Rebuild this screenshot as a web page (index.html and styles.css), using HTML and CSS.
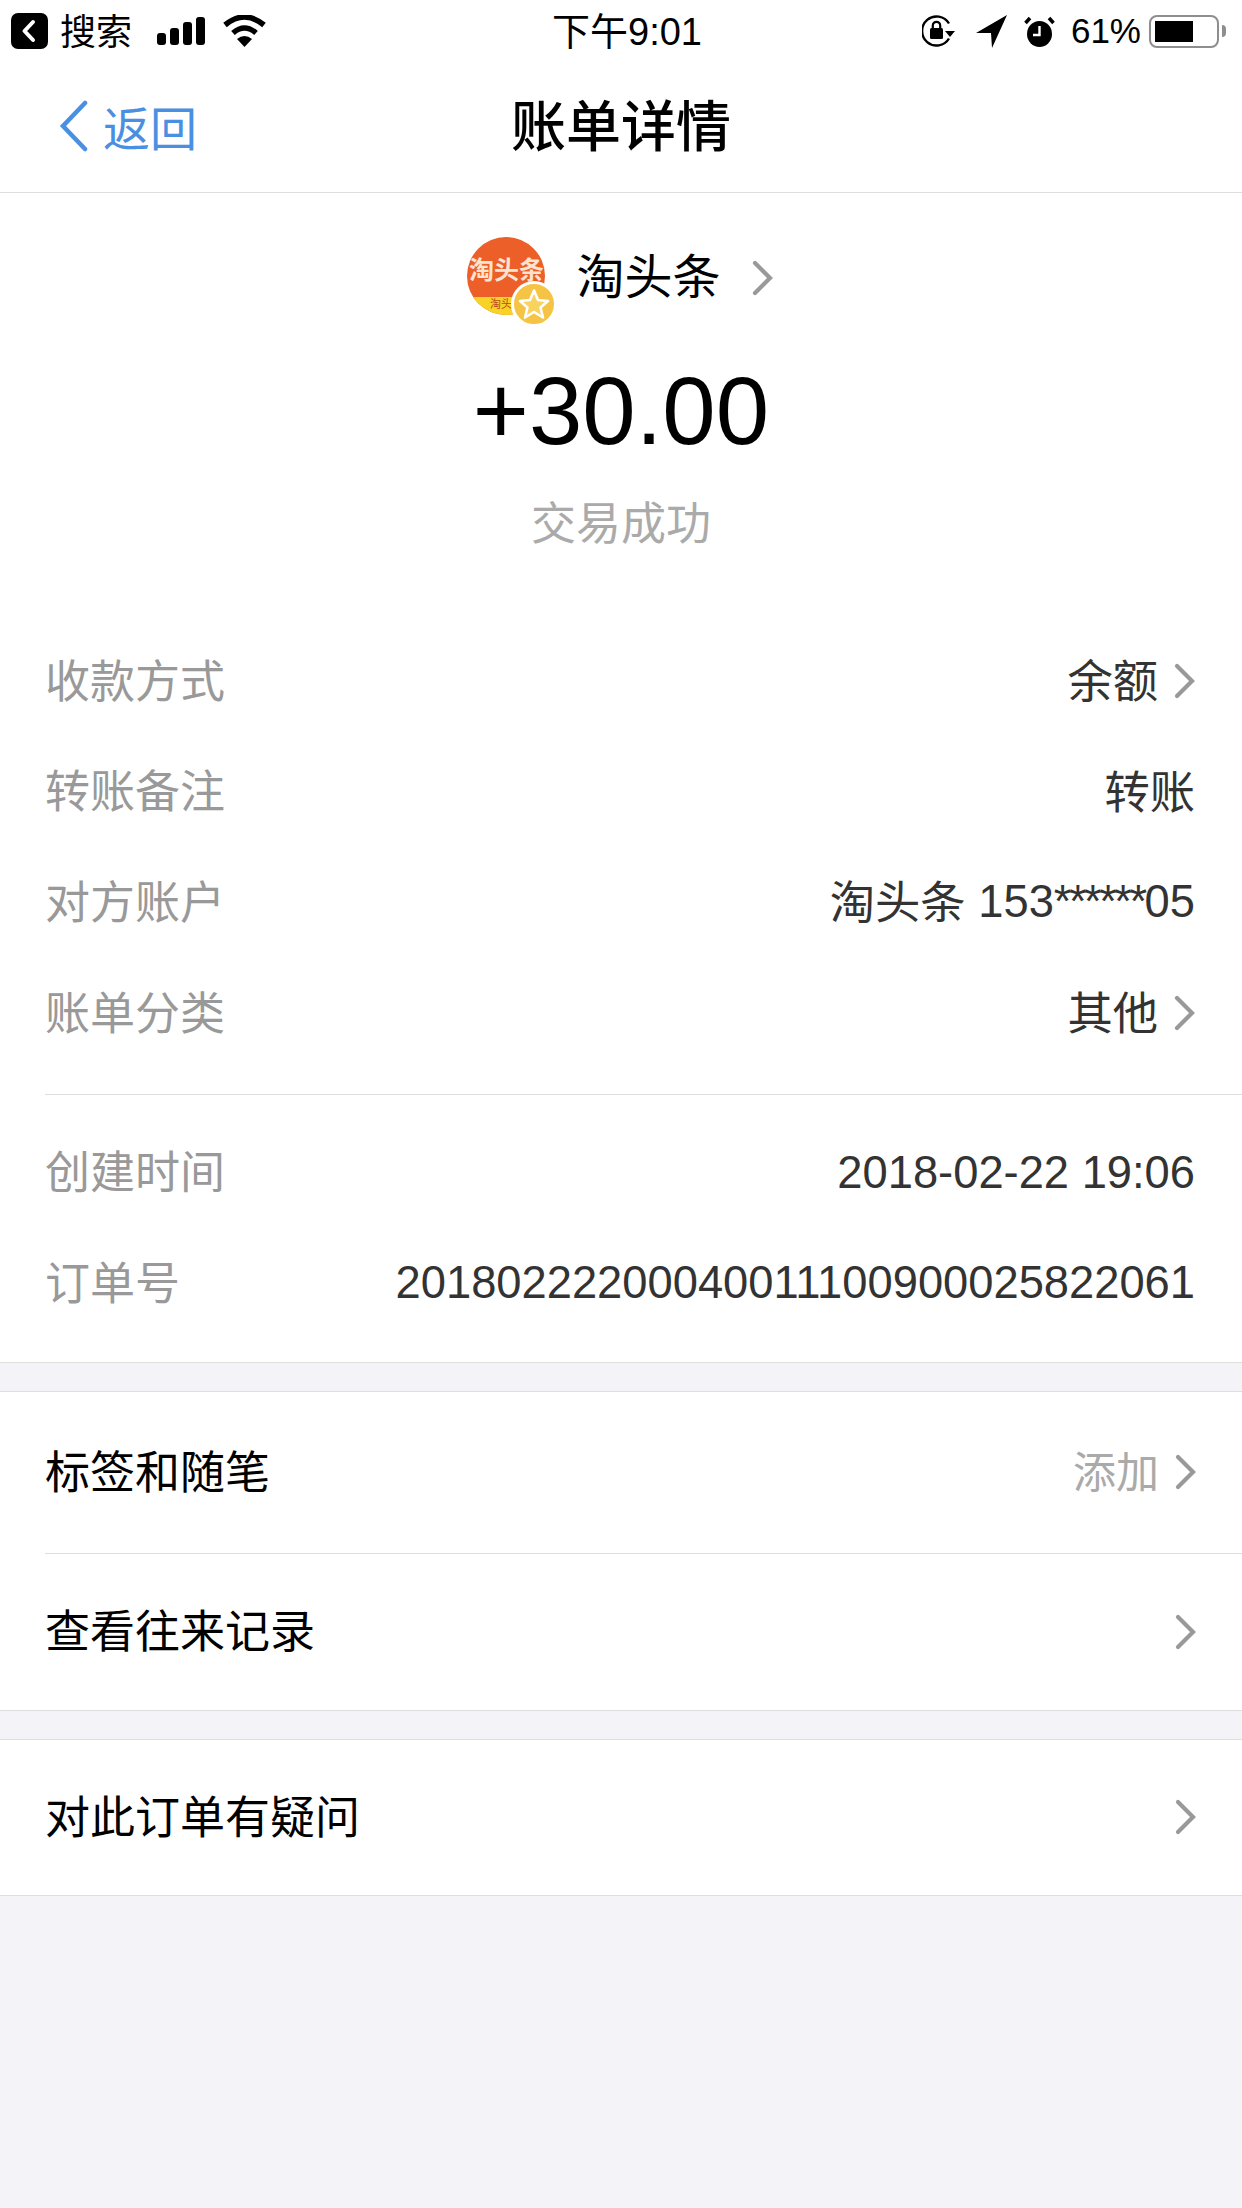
FILE: index.html
```html
<!DOCTYPE html>
<html>
<head>
    <title>账单详情</title>
    <link rel="stylesheet" href="styles.css">
</head>
<body>

    <div class="status-bar">
        <div class="status-left">
            <svg width="37" height="36" viewBox="0 0 37 36"><rect width="37" height="36" rx="7" fill="#000"/><path d="M22 9 L13.500 18 L22 27" fill="none" stroke="#fff" stroke-width="4" stroke-linecap="round" stroke-linejoin="round"/></svg>
            <span class="status-text">搜索</span>
            <svg class="signal" width="48" height="28" viewBox="0 0 48 28"><rect x="0" y="16" width="9" height="12" rx="3"/><rect x="13" y="11" width="9" height="17" rx="3"/><rect x="26" y="5" width="9" height="23" rx="3"/><rect x="39" y="0" width="9" height="28" rx="3"/></svg>
            <svg class="wifi" width="43" height="32" viewBox="0 0 43 32"><path d="M2 10 Q21.500 -6 41 10" fill="none" stroke="#000" stroke-width="5.500"/><path d="M10 18 Q21.500 8 33 18" fill="none" stroke="#000" stroke-width="5.500"/><path d="M14 24 Q21.500 18 29 24 L21.500 32 Z" fill="#000"/></svg>
        </div>
        <div class="status-time">下午9:01</div>
        <div class="status-right">
            <svg width="33" height="34" viewBox="0 0 33 34"><path d="M27 9.500 A14.500 14.500 0 1 0 27 24.500" fill="none" stroke="#000" stroke-width="2.400"/><path d="M23 17 L33 17 L28 23 Z" fill="#000"/><rect x="8" y="14" width="13" height="11" rx="1.500" fill="#000"/><path d="M10.800 14 V11.500 A3.700 3.700 0 0 1 18.200 11.500 V14" fill="none" stroke="#000" stroke-width="2.200"/></svg>
            <svg class="gps" width="31" height="33" viewBox="0 0 31 33"><path d="M31 0 L0 18 L15 18 L16 33 Z" fill="#000"/></svg>
            <svg class="alarm" width="31" height="33" viewBox="0 0 31 33"><ellipse cx="15.500" cy="19" rx="12.500" ry="13" fill="#000"/><path d="M15.500 11 V20 H9" fill="none" stroke="#fff" stroke-width="2.400"/><path d="M1.500 8 L6 3 M29.500 8 L25 3" stroke="#000" stroke-width="3.500"/></svg>
            <span class="battery-text">61%</span>
            <div class="battery"><div class="battery-level"></div></div>
            <div class="battery-cap"></div>
        </div>
    </div>

    <div class="nav-bar">
        <div class="nav-back">
            <svg width="32" height="52" viewBox="0 0 32 52"><path d="M27 3 L5 26 L27 49" fill="none" stroke="#4a90e2" stroke-width="4.500" stroke-linecap="round"/></svg>
            <span>返回</span>
        </div>
        <div class="nav-title">账单详情</div>
    </div>

    <div class="section detail-section">
        <div class="hero">
            <div class="merchant">
                <div class="avatar">
                    <div class="avatar-clip">
                        <div class="avatar-name">淘头条</div>
                        <div class="avatar-strip">淘头条</div>
                    </div>
                    <svg class="avatar-badge" width="46" height="46" viewBox="0 0 46 46"><circle cx="23" cy="23" r="21.500" fill="#f6c445" stroke="#fff" stroke-width="3"/><path d="M23 9.500 L27 19 L37 20 L29.500 26.500 L32 36.500 L23 31 L14 36.500 L16.500 26.500 L9 20 L19 19 Z" fill="#f8d360" stroke="#fff" stroke-width="2.600" stroke-linejoin="round"/></svg>
                </div>
                <span class="merchant-name">淘头条</span>
                <svg class="chevron merchant-chevron" width="24" height="38" viewBox="0 0 24 38"><path d="M4 4 L19 19 L4 34" fill="none" stroke="#999" stroke-width="4.200" stroke-linecap="round"/></svg>
            </div>
            <div class="amount">+30.00</div>
            <div class="trade-status">交易成功</div>
        </div>

        <div class="info-group first-group">
            <div class="info-row">
                <span class="info-label">收款方式</span>
                <span class="info-value"><span class="cjk">余额</span><svg class="chevron" width="24" height="38" viewBox="0 0 24 38"><path d="M4 4 L19 19 L4 34" fill="none" stroke="#999" stroke-width="4.200" stroke-linecap="round"/></svg></span>
            </div>
            <div class="info-row">
                <span class="info-label">转账备注</span>
                <span class="info-value"><span class="cjk">转账</span></span>
            </div>
            <div class="info-row">
                <span class="info-label">对方账户</span>
                <span class="info-value"><span class="cjk">淘头条</span>&nbsp;153<span class="stars">******</span>05</span>
            </div>
            <div class="info-row">
                <span class="info-label">账单分类</span>
                <span class="info-value"><span class="cjk">其他</span><svg class="chevron" width="24" height="38" viewBox="0 0 24 38"><path d="M4 4 L19 19 L4 34" fill="none" stroke="#999" stroke-width="4.200" stroke-linecap="round"/></svg></span>
            </div>
        </div>

        <div class="info-group second-group">
            <div class="info-row">
                <span class="info-label">创建时间</span>
                <span class="info-value">2018-02-22 19:06</span>
            </div>
            <div class="info-row">
                <span class="info-label">订单号</span>
                <span class="info-value">20180222200040011100900025822061</span>
            </div>
        </div>
    </div>

    <div class="section menu-section">
        <div class="menu-row row-tag">
            <span class="cjk">标签和随笔</span>
            <span class="menu-hint"><span class="cjk">添加</span><svg class="chevron" width="24" height="38" viewBox="0 0 24 38"><path d="M4 4 L19 19 L4 34" fill="none" stroke="#999" stroke-width="4.200" stroke-linecap="round"/></svg></span>
        </div>
        <div class="menu-row row-history">
            <span class="cjk">查看往来记录</span>
            <svg class="chevron" width="24" height="38" viewBox="0 0 24 38"><path d="M4 4 L19 19 L4 34" fill="none" stroke="#999" stroke-width="4.200" stroke-linecap="round"/></svg>
        </div>
    </div>

    <div class="section menu-section">
        <div class="menu-row row-question">
            <span class="cjk">对此订单有疑问</span>
            <svg class="chevron" width="24" height="38" viewBox="0 0 24 38"><path d="M4 4 L19 19 L4 34" fill="none" stroke="#999" stroke-width="4.200" stroke-linecap="round"/></svg>
        </div>
    </div>

</body>
</html>
```

FILE: styles.css
```css
* {
    box-sizing: border-box;
}
html, body {
    margin: 0;
    padding: 0;
}
body {
    width: 1242px;
    height: 2208px;
    overflow: hidden;
    font-family: "Liberation Sans", "Noto Sans CJK SC", sans-serif;
    background-color: #f3f3f8;
    color: #000;
}
svg {
    display: block;
    flex: none;
}

/* status bar */
.status-bar {
    height: 62px;
    background: #fff;
    display: flex;
    align-items: center;
    justify-content: space-between;
    padding: 0 16px 0 11px;
    position: relative;
}
.status-left, .status-right {
    display: flex;
    align-items: center;
}
.status-text {
    font-size: 36px;
    margin-left: 12px;
    padding-bottom: 4px;
}
.signal {
    margin-left: 25px;
}
.wifi {
    margin-left: 18px;
}
.status-time {
    position: absolute;
    left: 6px;
    right: -6px;
    top: 1px;
    text-align: center;
    font-size: 38px;
}
.gps {
    margin-left: 21px;
}
.alarm {
    margin-left: 17px;
}
.battery-text {
    font-size: 35px;
    margin-left: 16px;
}
.battery {
    width: 70px;
    height: 33px;
    margin-left: 8px;
    border: 2px solid #8e8e8e;
    border-radius: 8px;
    padding: 4px;
}
.battery-level {
    width: 38px;
    height: 21px;
    background: #000;
}
.battery-cap {
    width: 4px;
    height: 12px;
    margin-left: 3px;
    background: #8e8e8e;
    border-radius: 0 4px 4px 0;
}

/* nav bar */
.nav-bar {
    height: 131px;
    background: #fff;
    border-bottom: 1px solid #dedede;
    position: relative;
    display: flex;
    align-items: center;
    justify-content: center;
    padding-bottom: 10px;
}
.nav-back {
    position: absolute;
    left: 58px;
    top: 29px;
    display: flex;
    align-items: center;
    gap: 13px;
    color: #4a90e2;
    font-size: 47px;
}
.nav-title {
    font-size: 55px;
    font-weight: 500;
}

/* sections */
.section {
    background: #fff;
    border-bottom: 1px solid #dedede;
}
.menu-section {
    margin-top: 28px;
    border-top: 1px solid #dedede;
}

/* top of the bill */
.hero {
    padding-top: 44px;
    display: flex;
    flex-direction: column;
    align-items: center;
}
.merchant {
    display: flex;
    align-items: center;
    height: 78px;
}
.avatar {
    width: 78px;
    height: 78px;
    position: relative;
}
.avatar-clip {
    width: 78px;
    height: 78px;
    border-radius: 50%;
    overflow: hidden;
    background: #ec5f28;
    padding-top: 18px;
    position: relative;
}
.avatar-name {
    font-size: 25px;
    line-height: 30px;
    font-weight: 700;
    color: #fbe3d2;
    text-align: center;
    white-space: nowrap;
}
.avatar-strip {
    position: absolute;
    left: 0;
    right: 0;
    bottom: 0;
    height: 18px;
    background: #f7d328;
    color: #c0471c;
    font-size: 11px;
    line-height: 15px;
    text-align: center;
}
.avatar-badge {
    position: absolute;
    left: 44px;
    top: 44px;
}
.merchant-name {
    font-size: 48px;
    margin-left: 31px;
    margin-right: 30px;
    padding-bottom: 6px;
}
.merchant-chevron {
    margin-top: 4px;
}
.amount {
    font-size: 96px;
    line-height: 110px;
    margin-top: 41px;
}
.trade-status {
    font-size: 45px;
    line-height: 60px;
    color: #aaa;
    margin-top: 29px;
}

/* key / value rows */
.cjk {
    padding-bottom: 6px;
}
.info-group {
    margin-left: 45px;
    padding-right: 47px;
}
.first-group {
    margin-top: 71px;
    padding-bottom: 26px;
    border-bottom: 1px solid #dedede;
}
.second-group {
    padding-top: 22px;
    padding-bottom: 23px;
}
.info-row {
    height: 110.6px;
    display: flex;
    align-items: center;
    justify-content: space-between;
    font-size: 45.3px;
}
.info-label {
    font-size: 45px;
    color: #999;
    padding-bottom: 6px;
}
.info-value {
    color: #333;
    display: flex;
    align-items: center;
    white-space: pre;
}
.stars {
    letter-spacing: -2.5px;
}
.info-value .chevron {
    margin-left: 15px;
    margin-right: -2px;
}

/* menu rows */
.menu-row {
    display: flex;
    align-items: center;
    justify-content: space-between;
    margin-left: 45px;
    padding-right: 44px;
    font-size: 45px;
}
.row-tag {
    height: 162px;
    border-bottom: 1px solid #dedede;
}
.row-history {
    height: 156px;
}
.row-question {
    height: 155px;
}
.menu-hint {
    color: #aaa;
    font-size: 43px;
    display: flex;
    align-items: center;
}
.menu-hint .chevron {
    margin-left: 15px;
}
```
